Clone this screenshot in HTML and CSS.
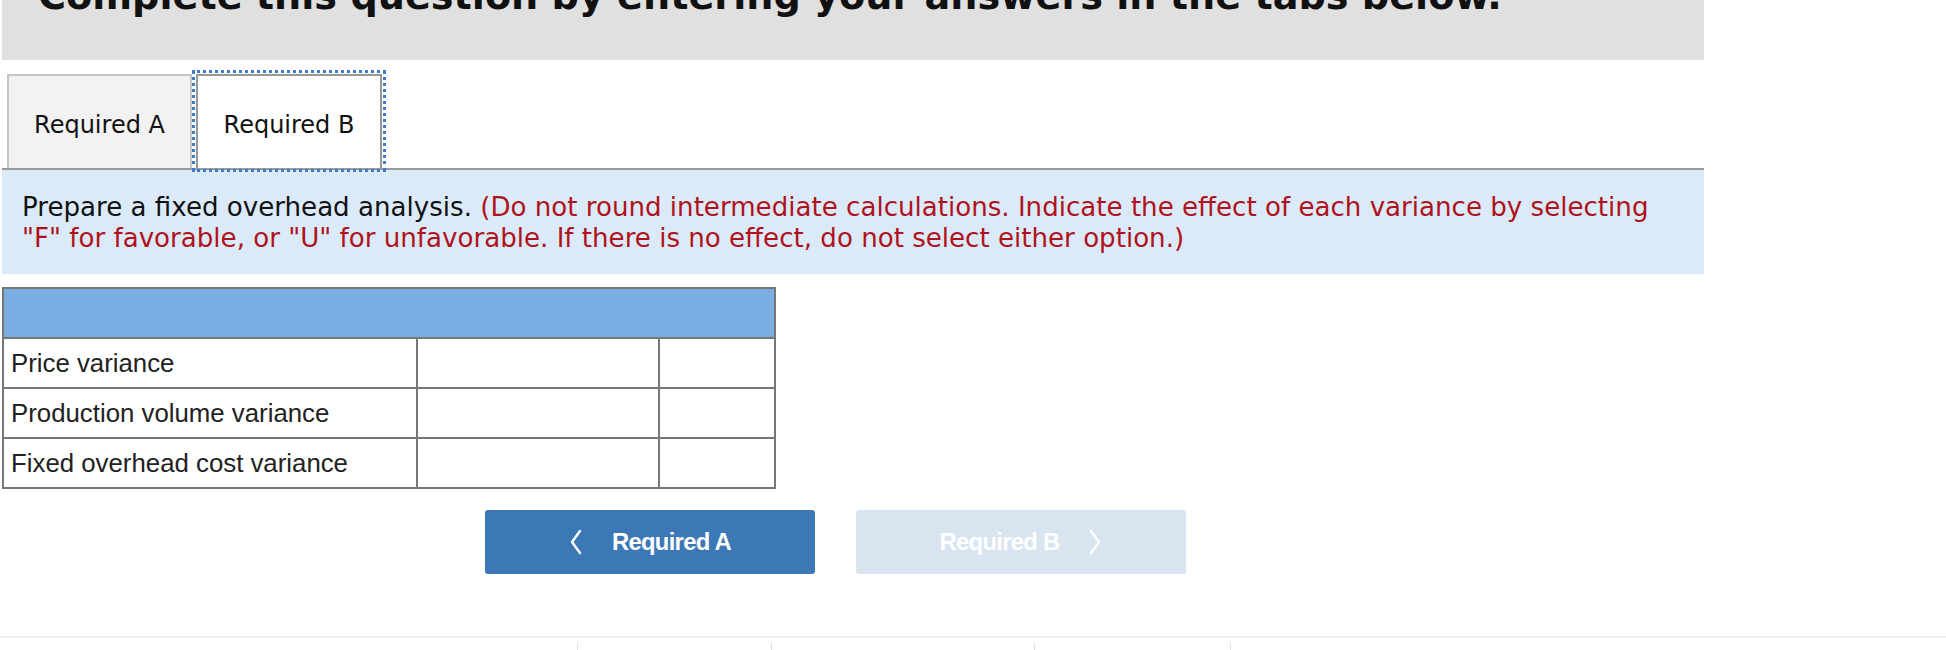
FILE: index.html
```html
<!DOCTYPE html>
<html>
<head>
<meta charset="utf-8">
<link rel="stylesheet" href="styles.css">
</head>
<body>
<div class="page">
  <div class="header">
    <div class="header-title">Complete this question by entering your answers in the tabs below.</div>
  </div>
  <div class="tabs">
    <div class="tab tab-inactive">Required A</div>
    <div class="tab tab-active">Required B</div>
  </div>
  <div class="instructions">
    Prepare a fixed overhead analysis. <span class="red">(Do not round intermediate calculations. Indicate the effect of each variance by selecting "F" for favorable, or "U" for unfavorable. If there is no effect, do not select either option.)</span>
  </div>
  <table class="grid">
    <tr class="head"><td colspan="3"></td></tr>
    <tr><td class="label">Price variance</td><td class="c2"></td><td class="c3"></td></tr>
    <tr><td class="label">Production volume variance</td><td class="c2"></td><td class="c3"></td></tr>
    <tr><td class="label">Fixed overhead cost variance</td><td class="c2"></td><td class="c3"></td></tr>
  </table>
  <div class="nav">
    <div class="btn btn-prev">
      <svg class="chev" width="14" height="26" viewBox="0 0 14 26"><path d="M11 2 L3 13 L11 24" fill="none" stroke="#fff" stroke-width="2.4" stroke-linecap="round" stroke-linejoin="round"/></svg>
      <span>Required A</span>
    </div>
    <div class="btn btn-next">
      <span>Required B</span>
      <svg class="chev" width="14" height="26" viewBox="0 0 14 26"><path d="M3 2 L11 13 L3 24" fill="none" stroke="#fff" stroke-width="2.4" stroke-linecap="round" stroke-linejoin="round"/></svg>
    </div>
  </div>
</div>
<div class="footer">
  <div class="ticks">
    <span class="tick t1"></span>
    <span class="tick t2"></span>
    <span class="tick t3"></span>
    <span class="tick t4"></span>
  </div>
</div>
</body>
</html>
```
FILE: styles.css
```css
html, body {
  margin: 0;
  padding: 0;
  background: #fff;
}
.page {
  margin-left: 2px;
  width: 1702px;
}
.header {
  height: 60px;
  background: #e0e0e0;
  overflow: hidden;
}
.header-title {
  font-family: "DejaVu Sans", Verdana, sans-serif;
  font-weight: bold;
  font-size: 38.2px;
  line-height: 38px;
  margin-top: -23px;
  padding-left: 36px;
  color: #111;
  white-space: nowrap;
}
.tabs {
  display: flex;
  align-items: flex-end;
  margin-top: 14px;
  border-bottom: 2px solid #999;
  height: 94px;
}
.tab {
  box-sizing: border-box;
  height: 94px;
  padding-top: 5px;
  display: flex;
  align-items: center;
  justify-content: center;
  font-family: "DejaVu Sans", Verdana, sans-serif;
  font-size: 24px;
  color: #111;
  border: 2px solid #c6c6c6;
  border-bottom: none;
}
.tab-inactive {
  margin-left: 5px;
  width: 185px;
  background: #f2f2f2;
}
.tab-active {
  margin-left: 4px;
  width: 186px;
  background: #fff;
  border-color: #999;
  outline: 3px dotted #3f7bc6;
  outline-offset: 1px;
}
.instructions {
  background: #dbeaf9;
  height: 104px;
  box-sizing: border-box;
  padding: 22px 20px 0 20px;
  font-family: "DejaVu Sans", Verdana, sans-serif;
  font-size: 26.1px;
  line-height: 31px;
  color: #111;
}
.red {
  color: #b0121b;
}
.grid {
  margin-top: 13px;
  border-collapse: collapse;
  width: 774px;
  font-family: "Liberation Sans", Arial, sans-serif;
  font-size: 25.8px;
  color: #222;
}
.grid td {
  border: 2px solid #777;
  height: 50px;
  padding: 0;
  box-sizing: border-box;
}
.grid .head td {
  background: #7aade1;
  height: 50px;
}
.grid td.label {
  width: 414px;
  padding-left: 7px;
}
.grid td.c2 {
  width: 242px;
}
.nav {
  display: flex;
  gap: 41px;
  margin-top: 21px;
  padding-left: 483px;
}
.btn {
  width: 330px;
  height: 64px;
  border-radius: 3px;
  display: flex;
  align-items: center;
  justify-content: center;
  gap: 29px;
  font-family: "Liberation Sans", Arial, sans-serif;
  font-weight: bold;
  font-size: 23.8px;
  letter-spacing: -0.7px;
  color: #fff;
}
.btn-prev {
  background: #3c78b6;
}
.btn-next {
  background: #d9e4f1;
}
.chev {
  display: block;
}
.footer {
  margin-top: 62px;
  border-top: 2px solid #f0f0f0;
  height: 13px;
}
.ticks {
  position: relative;
  height: 13px;
}
.tick {
  position: absolute;
  top: 5px;
  width: 1px;
  height: 8px;
  background: #ddd;
}
.t1 { left: 577px; }
.t2 { left: 771px; }
.t3 { left: 1034px; }
.t4 { left: 1230px; }
```
